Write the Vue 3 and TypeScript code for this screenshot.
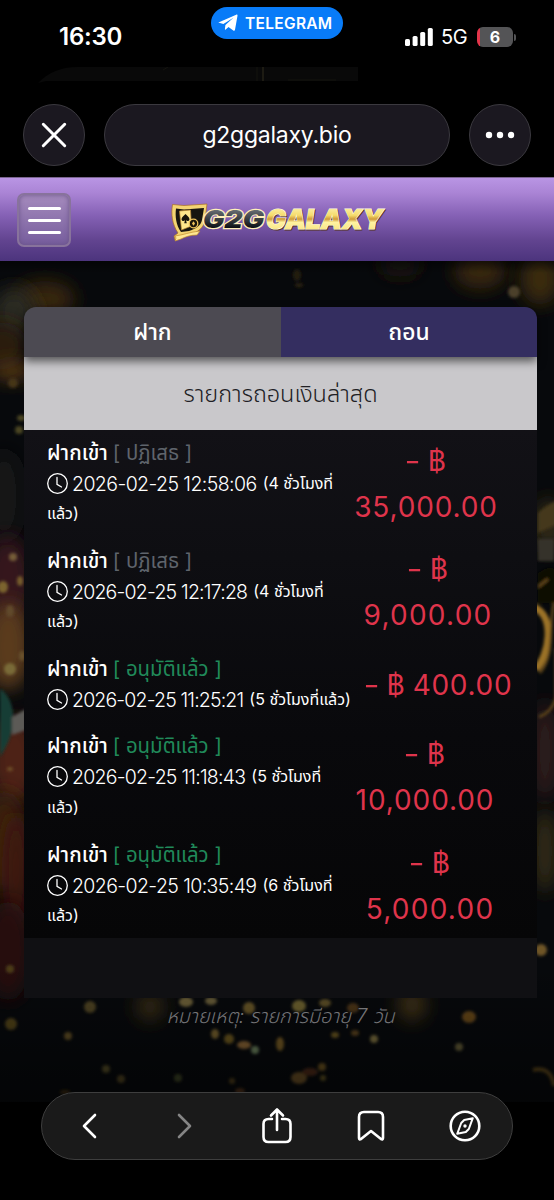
<script setup lang="ts">
interface Entry {
  status: string
  kind: 'rejected' | 'approved'
  time: string
  tracking: number
  ago: string
  agoRest: string
  amount: string
  amountTracking: number
  wrapped: boolean
  detailWidth: number
}

interface Spot {
  x: number
  y: number
  rx: number
  ry: number
  color: string
}

const entries: Entry[] = [
  { status: 'ปฏิเสธ', kind: 'rejected', time: '2026-02-25 12:58:06', tracking: -0.58, ago: '(4 ชั่วโมงที่', agoRest: 'แล้ว)', amount: '35,000.00', amountTracking: 0.85, wrapped: true, detailWidth: 291 },
  { status: 'ปฏิเสธ', kind: 'rejected', time: '2026-02-25 12:17:28', tracking: -0.79, ago: '(4 ชั่วโมงที่', agoRest: 'แล้ว)', amount: '9,000.00', amountTracking: 1.25, wrapped: true, detailWidth: 295 },
  { status: 'อนุมัติแล้ว', kind: 'approved', time: '2026-02-25 11:25:21', tracking: -0.84, ago: '(5 ชั่วโมงที่แล้ว)', agoRest: '', amount: '400.00', amountTracking: 0.7, wrapped: false, detailWidth: 316 },
  { status: 'อนุมัติแล้ว', kind: 'approved', time: '2026-02-25 11:18:43', tracking: -0.76, ago: '(5 ชั่วโมงที่', agoRest: 'แล้ว)', amount: '10,000.00', amountTracking: 0.9, wrapped: true, detailWidth: 289 },
  { status: 'อนุมัติแล้ว', kind: 'approved', time: '2026-02-25 10:35:49', tracking: -0.6, ago: '(6 ชั่วโมงที่', agoRest: 'แล้ว)', amount: '5,000.00', amountTracking: 1.25, wrapped: true, detailWidth: 299 },
]

// Large soft colour areas of the backdrop, relative to the page area.
const glows: Spot[] = [
  { x: 45, y: 38, rx: 30, ry: 18, color: '#38250f' },
  { x: 14, y: 52, rx: 22, ry: 26, color: '#2b2b24' },
  { x: 0, y: 85, rx: 28, ry: 24, color: '#2a1a0e' },
  { x: 12, y: 110, rx: 20, ry: 9, color: '#5a3a12' },
  { x: 4, y: 235, rx: 18, ry: 45, color: '#151718' },
  { x: 8, y: 320, rx: 24, ry: 45, color: '#34191c' },
  { x: 8, y: 385, rx: 24, ry: 44, color: '#5a3b1b' },
  { x: 14, y: 500, rx: 26, ry: 44, color: '#4d2312' },
  { x: 4, y: 580, rx: 24, ry: 50, color: '#3b200f' },
  { x: 16, y: 610, rx: 14, ry: 60, color: '#3d130c' },
  { x: 8, y: 690, rx: 24, ry: 50, color: '#281009' },
  { x: 480, y: 10, rx: 26, ry: 18, color: '#38260f' },
  { x: 540, y: 18, rx: 20, ry: 26, color: '#3a290f' },
  { x: 400, y: 4, rx: 22, ry: 12, color: '#1c180f' },
  { x: 548, y: 265, rx: 14, ry: 28, color: '#332a14' },
  { x: 545, y: 490, rx: 14, ry: 50, color: '#2e1d1a' },
  { x: 545, y: 590, rx: 13, ry: 42, color: '#302915' },
  { x: 150, y: 746, rx: 14, ry: 14, color: '#3a2e13' },
  { x: 412, y: 744, rx: 14, ry: 16, color: '#443615' },
]

const sparks: Spot[] = [
  { x: 13, y: 122, rx: 5, ry: 5, color: '#453417' },
  { x: 21, y: 157, rx: 4, ry: 3, color: '#4a4522' },
  { x: 19, y: 169, rx: 4, ry: 4, color: '#4a4522' },
  { x: 13, y: 296, rx: 4, ry: 4, color: '#755d39' },
  { x: 3, y: 326, rx: 5, ry: 6, color: '#7b642e' },
  { x: 20, y: 320, rx: 3, ry: 5, color: '#775d2c' },
  { x: 10, y: 350, rx: 4, ry: 6, color: '#61482a' },
  { x: 10, y: 408, rx: 6, ry: 6, color: '#796b39' },
  { x: 22, y: 395, rx: 3, ry: 5, color: '#69512c' },
  { x: 10, y: 508, rx: 3, ry: 2, color: '#6e4f25' },
  { x: 10, y: 708, rx: 4, ry: 4, color: '#4e3d18' },
  { x: 514, y: 31, rx: 6, ry: 6, color: '#4c4029' },
  { x: 297, y: 14, rx: 4, ry: 6, color: '#211d10' },
  { x: 299, y: 24, rx: 4, ry: 2, color: '#2a210f' },
  { x: 541, y: 689, rx: 6, ry: 6, color: '#6e5526' },
  { x: 90, y: 746, rx: 6, ry: 6, color: '#4e4320' },
  { x: 11, y: 763, rx: 6, ry: 6, color: '#4e3f19' },
  { x: 68, y: 775, rx: 4, ry: 4, color: '#5a4920' },
  { x: 186, y: 741, rx: 7, ry: 5, color: '#6d6038' },
  { x: 211, y: 740, rx: 6, ry: 4, color: '#665c37' },
  { x: 249, y: 747, rx: 6, ry: 6, color: '#665427' },
  { x: 299, y: 745, rx: 7, ry: 6, color: '#6c602f' },
  { x: 325, y: 742, rx: 6, ry: 4, color: '#5c4d25' },
  { x: 353, y: 747, rx: 6, ry: 5, color: '#4c3519' },
  { x: 215, y: 773, rx: 4, ry: 5, color: '#6f5c2a' },
  { x: 229, y: 778, rx: 5, ry: 5, color: '#66521e' },
  { x: 244, y: 784, rx: 7, ry: 4, color: '#825f32' },
  { x: 255, y: 789, rx: 4, ry: 4, color: '#637856' },
  { x: 280, y: 783, rx: 4, ry: 7, color: '#6e5520' },
  { x: 335, y: 774, rx: 4, ry: 3, color: '#66531f' },
  { x: 355, y: 772, rx: 4, ry: 3, color: '#57401a' },
  { x: 374, y: 778, rx: 4, ry: 4, color: '#74683a' },
  { x: 469, y: 756, rx: 7, ry: 6, color: '#634419' },
  { x: 459, y: 786, rx: 4, ry: 4, color: '#5b5533' },
  { x: 106, y: 808, rx: 4, ry: 4, color: '#4c4420' },
  { x: 121, y: 818, rx: 4, ry: 4, color: '#493c1e' },
  { x: 178, y: 817, rx: 4, ry: 4, color: '#393c20' },
  { x: 232, y: 820, rx: 3, ry: 3, color: '#4c3b19' },
  { x: 240, y: 830, rx: 5, ry: 3, color: '#4c2e16' },
  { x: 299, y: 817, rx: 8, ry: 6, color: '#624822' },
  { x: 310, y: 811, rx: 8, ry: 4, color: '#462817' },
  { x: 322, y: 806, rx: 4, ry: 4, color: '#624c1d' },
  { x: 323, y: 817, rx: 3, ry: 3, color: '#564b1d' },
  { x: 65, y: 831, rx: 5, ry: 2, color: '#3d2c0d' },
]
</script>

<template>
  <div class="screen">
    <div class="status-bar">
      <span class="clock">16:30</span>
      <span class="app-pill">
        <svg width="20" height="18" viewBox="0 0 20 18"><path d="M1 8.2 18.2.7c.9-.3 1.4.2 1.3 1.1l-2.5 14c-.2 1-.9 1.2-1.7.7l-4.8-3.6-2.8 2.7c-.5.4-.9.2-.8-.5l.5-4.2 8-7.200-10 6.300-4.300-1.200c-.8-.2-.8-.4-.1-.6Z" fill="#fff" /></svg>
        <span>TELEGRAM</span>
      </span>
      <span class="signal">
        <svg width="28" height="18" viewBox="0 0 28 18" fill="#fff">
          <rect x="0" y="11" width="5" height="7" rx="1.6" />
          <rect x="7.6" y="8" width="5" height="10" rx="1.6" />
          <rect x="15.2" y="4" width="5" height="14" rx="1.6" />
          <rect x="22.8" y="0" width="5" height="18" rx="1.6" />
        </svg>
        <span class="network">5G</span>
        <span class="battery">6</span>
        <i class="battery-cap"></i>
      </span>
    </div>

    <div class="peek">
      <svg width="400" height="16" viewBox="0 0 400 16">
        <path d="M0 16C10 6 22 0 40 0H320V14H8Z" fill="#090909" />
        <path d="M225 0V14" stroke="#1d1b13" stroke-width="2" />
        <path d="M219 0V14M125 3l5-3M250 13H298" stroke="#15140f" />
      </svg>
    </div>

    <div class="address-row">
      <button class="round" aria-label="close">
        <svg width="28" height="28" viewBox="0 0 28 28"><path d="m3.300 3.300 21.400 21.400m0-21.400L3.300 24.700" stroke="#fff" stroke-width="3" stroke-linecap="round" /></svg>
      </button>
      <div class="address"><span>g2ggalaxy.bio</span></div>
      <button class="round" aria-label="more">
        <svg width="30" height="8" viewBox="0 0 30 8" fill="#fff"><circle cx="4" cy="4" r="3.200" /><circle cx="15" cy="4" r="3.200" /><circle cx="26" cy="4" r="3.200" /></svg>
      </button>
    </div>

    <header class="site-header">
      <button class="menu" aria-label="menu"><i></i><i></i><i></i></button>
      <svg class="logo" width="216" height="44" viewBox="0 0 216 44">
        <defs>
          <linearGradient id="gold" x1="0" y1="0" x2="0" y2="1">
            <stop offset="0" stop-color="#fffbd0" />
            <stop offset=".4" stop-color="#f6dc6c" />
            <stop offset=".52" stop-color="#cf9a38" />
            <stop offset=".62" stop-color="#fff3a0" />
            <stop offset="1" stop-color="#f5df78" />
          </linearGradient>
          <linearGradient id="steel" x1="0" y1="0" x2="0" y2="1">
            <stop offset=".15" stop-color="#6b7177" />
            <stop offset=".8" stop-color="#0c1015" />
          </linearGradient>
        </defs>
        <path d="M1.500 3.500 13 4.500 36 3 34 19C33 27 26 31 20 34L8 36 4 39 3 35 7 32C1 23 0 13 1.500 3.500Z" fill="#f3d473" stroke="#a96f22" stroke-width=".7" />
        <path d="m5 7.500 8 1 20-1.500-2 12c-1 6-7 9-13 11l-8 1C5 24 4 15 5 7.500Z" fill="#17150f" />
        <path d="m8.500 10 11-1 1 16-10 4Z" fill="#ffe68c" stroke="#b8822e" stroke-width=".7" />
        <path d="M14.500 13c1.500 2 4 3 4 5.200 0 2-2.500 2.200-3.500 1l.8 3h-2.600l.8-3c-1 1.200-3.500 1-3.500-1 0-2.200 2.500-3.200 4-5.200Z" fill="#18140b" />
        <circle cx="22.500" cy="22.500" r="4.300" fill="#1b160b" stroke="#efc45c" stroke-width="1.300" />
        <path d="m22.500 20.300 1.500 2.200-1.500 2.200-1.500-2.200Z" fill="#efc45c" />
        <path d="M4 35c8-1 15-4 25-5l-3 4c-7 0-12 2-16 4l-6 2 1-3Z" fill="#ffe893" stroke="#c08a2d" stroke-width=".7" />
        <g class="wordmark">
          <text x="32" y="26.800" textLength="61" lengthAdjust="spacingAndGlyphs" font-size="24" fill="url(#steel)" stroke="#fff0bb" stroke-width="2.400" paint-order="stroke">G2G</text>
          <text x="96" y="29" textLength="117" lengthAdjust="spacingAndGlyphs" font-size="26.500" fill="#573620" stroke="#573620">GALAXY</text>
          <text x="95" y="27.500" textLength="117" lengthAdjust="spacingAndGlyphs" font-size="26.500" fill="url(#gold)" stroke="#fffbe0" stroke-width="1.200" paint-order="stroke">GALAXY</text>
        </g>
      </svg>
    </header>

    <main class="page">
      <svg class="backdrop" width="554" height="841" viewBox="0 0 554 841">
        <defs>
          <filter id="soft" x="-80%" y="-80%" width="260%" height="260%"><feGaussianBlur stdDeviation="9" /></filter>
          <filter id="spark" x="-80%" y="-80%" width="260%" height="260%"><feGaussianBlur stdDeviation="1.800" /></filter>
        </defs>
        <ellipse v-for="(g, i) in glows" :key="'g' + i" :cx="g.x" :cy="g.y" :rx="g.rx" :ry="g.ry" :fill="g.color" filter="url(#soft)" />
        <g filter="url(#spark)">
          <ellipse v-for="(s, i) in sparks" :key="'s' + i" :cx="s.x" :cy="s.y" :rx="s.rx" :ry="s.ry" :fill="s.color" />
          <path d="M0 428c9 5 15 20 13 36-2 13-7 22-13 32Z" fill="#123d36" />
          <path d="m12 456 14-8v21l-14 5Z" fill="#5c5a57" />
          <path d="M538 252q8-8 18-12v24l-18 8Z" fill="#44371a" />
          <path d="M538 278h16v22h-16Z" fill="#34322b" />
          <path d="M538 312c8-6 14-8 18-2v32h-18Z" fill="#090805" />
          <path d="M534 346c22 10 15 48 2 62" fill="none" stroke="#9b7227" stroke-width="7" />
          <path d="M538 326l10-8m6 24c-6 24 2 50-14 70m16-25v50q-4 14-17 19" fill="none" stroke="#65491a" stroke-width="2.500" />
          <path d="M533 809q18-4 21 16" fill="none" stroke="#554119" stroke-width="4" />
        </g>
      </svg>

      <section class="card">
        <nav class="tabs">
          <span class="tab">ฝาก</span>
          <span class="tab active">ถอน</span>
        </nav>
        <h1 class="title"><span>รายการถอนเงินล่าสุด</span></h1>
        <ul class="entries">
          <li v-for="e in entries" :key="e.time" class="entry">
            <div class="detail" :style="{ width: e.detailWidth + 'px' }">
              <div class="line"><span class="kind">ฝากเข้า</span> <span class="state" :class="e.kind">[ {{ e.status }} ]</span></div>
              <div class="line">
                <svg class="clock-icon" width="22" height="22" viewBox="0 0 22 22" fill="none" stroke="#fff" stroke-width="1.300" stroke-linecap="round"><circle cx="10.500" cy="10.500" r="9.800" /><path d="M10 4.500v6.800l4.500 2.700" /></svg>
                <span class="time" :style="{ letterSpacing: e.tracking + 'px' }">{{ e.time }}</span>
                <span class="ago">{{ e.ago }}</span>
              </div>
              <div v-if="e.agoRest" class="line"><span class="ago rest">{{ e.agoRest }}</span></div>
            </div>
            <div class="amount"><span class="minus">-</span><span> ฿</span><br v-if="e.wrapped" /><span v-else>&nbsp;</span><span :style="{ letterSpacing: e.amountTracking + 'px' }">{{ e.amount }}</span></div>
          </li>
        </ul>
        <div class="card-foot"></div>
      </section>
      <p class="note"><span>หมายเหตุ: รายการมีอายุ 7 วัน</span></p>
    </main>

    <nav class="toolbar">
      <svg width="30" height="38" viewBox="0 0 30 38"><path d="M20 8 9 19l11 11" stroke="#fff" /></svg>
      <svg width="30" height="38" viewBox="0 0 30 38"><path d="m10 8 11 11-11 11" stroke="#858585" /></svg>
      <svg width="34" height="38" viewBox="0 0 34 38"><path d="M12 12H8.500Q3.500 12 3.500 17v13q0 5 5 5h17q5 0 5-5V17q0-5-5-5H22M17 23V2.500m-6 6 6-6 6 6" stroke="#fff" /></svg>
      <svg width="30" height="38" viewBox="0 0 30 38"><path d="M3 31V10q0-5 5-5h14q5 0 5 5v21q0 2-2 1l-10-8-10 8q-2 1-2-1Z" stroke="#fff" /></svg>
      <svg width="34" height="38" viewBox="0 0 34 38"><circle cx="17" cy="19" r="14.300" stroke="#fff" /><path d="M24.800 11.200 20.800 22l-3 3-8.600 1.800L13.200 16l3-3Z" stroke="#fff" stroke-width="2" /><circle cx="17" cy="19" r="1.700" fill="#fff" /></svg>
    </nav>
  </div>
</template>

<style>
body {
  margin: 0;
  background: #000;
}
</style>

<style scoped>
* {
  box-sizing: border-box;
}

.screen {
  width: 554px;
  height: 1200px;
  overflow: hidden;
  background: #000;
  color: #fff;
  font-family: Inter, "Noto Sans Thai", Kanit, sans-serif;
  display: flex;
  flex-direction: column;
}

.status-bar {
  height: 66px;
  flex: none;
  display: flex;
  align-items: flex-start;
  padding-left: 59px;
}

.clock {
  width: 152px;
  padding-top: 22px;
  font-size: 24px;
  line-height: 30px;
  font-weight: 600;
  letter-spacing: -0.2px;
}

.app-pill {
  width: 132px;
  height: 32px;
  margin-top: 7px;
  padding-left: 7px;
  border-radius: 16px;
  background: #087bf8;
  display: flex;
  align-items: center;
  gap: 7px;
  font-size: 15.500px;
  font-weight: 600;
  letter-spacing: 0.3px;
}

.signal {
  display: flex;
  align-items: center;
  margin: 27px 0 0 62px;
  height: 20px;
}

.network {
  margin-left: 8px;
  width: 36px;
  font-size: 20px;
  letter-spacing: -0.4px;
}

.battery {
  width: 36px;
  height: 20px;
  border-radius: 6px;
  background: linear-gradient(90deg, #e3354a 3px, #545456 3px);
  font-size: 16px;
  font-weight: 700;
  line-height: 20px;
  text-align: center;
}

.battery-cap {
  width: 2px;
  height: 7px;
  margin-left: 1px;
  border-radius: 0 2px 2px 0;
  background: #545456;
}

.peek {
  height: 38px;
  flex: none;
  padding: 1px 0 0 38px;
}

.peek svg {
  display: block;
}

.address-row {
  display: flex;
  gap: 19px;
  height: 73px;
  flex: none;
  padding-left: 23px;
}

.round,
.address {
  height: 62px;
  border: 1px solid #3b393f;
  border-radius: 31px;
  background: #1b1820;
  display: flex;
  align-items: center;
  justify-content: center;
  padding: 0;
}

.round {
  width: 62px;
  flex: none;
}

.address {
  width: 346px;
  font-size: 23px;
  letter-spacing: -0.25px;
}

.site-header {
  height: 84px;
  flex: none;
  display: flex;
  align-items: flex-start;
  border-top: 1px solid #7b6590;
  background: linear-gradient(#b995e4, #aa84d5 18%, #8561b5 45%, #624490 75%, #4c347d);
  padding: 15px 0 0 17px;
}

.menu {
  width: 54px;
  height: 54px;
  border: 2px solid #88739c;
  border-radius: 7px;
  background: linear-gradient(#a58bbd, #765d9d);
  box-shadow: inset 0 0 5px #6a5488;
  display: flex;
  flex-direction: column;
  align-items: center;
  justify-content: center;
  gap: 9px;
  padding: 0;
}

.menu i {
  width: 33px;
  height: 3px;
  border-radius: 2px;
  background: #fff;
}

.logo {
  margin: 8px 0 0 100px;
}

.wordmark {
  font-family: Inter, sans-serif;
  font-weight: 900;
  font-style: italic;
}

.page {
  position: relative;
  height: 841px;
  flex: none;
  padding: 46px 17px 0 24px;
  background: #07090c;
}

.backdrop {
  position: absolute;
  inset: 0;
}

.page::before {
  content: "";
  position: absolute;
  inset: 0;
  z-index: 1;
  background: linear-gradient(rgba(0, 0, 0, 0.5), transparent 12px, transparent 700px, rgba(0, 0, 0, 0.5) 841px);
}

.card {
  position: relative;
  z-index: 2;
  width: 513px;
}

.tabs {
  position: relative;
  z-index: 1;
  display: grid;
  grid-template-columns: 257px 256px;
  height: 50px;
  border-radius: 12px 12px 0 0;
  box-shadow: 0 4px 10px rgba(0, 0, 0, 0.6);
}

.tab {
  background: #4c4a52;
  border-radius: 12px 0 0 0;
  font-size: 22.800px;
  font-weight: 500;
  line-height: 49px;
  text-align: center;
}

.tab.active {
  background: #342e60;
  border-radius: 0 12px 0 0;
}

.title {
  margin: 0;
  height: 73px;
  background: #c9c8cb;
  color: #202024;
  font-size: 23.500px;
  font-weight: 300;
  line-height: 73px;
  text-align: center;
}

.entries {
  list-style: none;
  margin: 0;
  padding: 0;
  height: 508px;
  background: linear-gradient(#121116, #0e0e12 25%, #09090c 60%, #060607);
}

.entry {
  display: flex;
  align-items: center;
  padding: 7.500px 23px 8.800px;
}

.detail {
  flex: none;
}

.line {
  height: 30.500px;
  display: flex;
  align-items: center;
  white-space: nowrap;
}

.kind {
  font-size: 20.600px;
  font-weight: 500;
  margin-right: 5px;
}

.state {
  font-size: 20.400px;
  font-weight: 400;
}

.rejected {
  color: #5f646c;
}

.approved {
  color: #208a5a;
}

.clock-icon {
  flex: none;
  margin-right: 3px;
}

.time {
  font-size: 19.500px;
  font-weight: 300;
  margin-right: 6px;
}

.ago {
  font-size: 16px;
}

.amount {
  flex: 1;
  white-space: nowrap;
  text-align: center;
  color: #df344b;
  font-size: 28px;
  line-height: 46px;
}

.minus {
  display: inline-block;
  transform: scaleX(1.250);
  margin-right: 1px;
}

.card-foot {
  height: 60px;
  background: #101013;
}

.note {
  position: relative;
  z-index: 2;
  margin: 0;
  text-align: center;
  color: #747477;
  font-size: 19.700px;
  font-style: italic;
  font-weight: 300;
  line-height: 36px;
}

.toolbar {
  position: absolute;
  left: 41px;
  top: 1092px;
  width: 472px;
  height: 68px;
  border: 1px solid #3e3e3e;
  border-radius: 34px;
  background: #1a1a1a;
  display: grid;
  grid-template-columns: repeat(5, 93.700px);
  place-items: center;
  padding-left: 1px;
  z-index: 3;
}

.toolbar svg {
  fill: none;
  stroke-width: 2.600;
  stroke-linecap: round;
  stroke-linejoin: round;
}
</style>
